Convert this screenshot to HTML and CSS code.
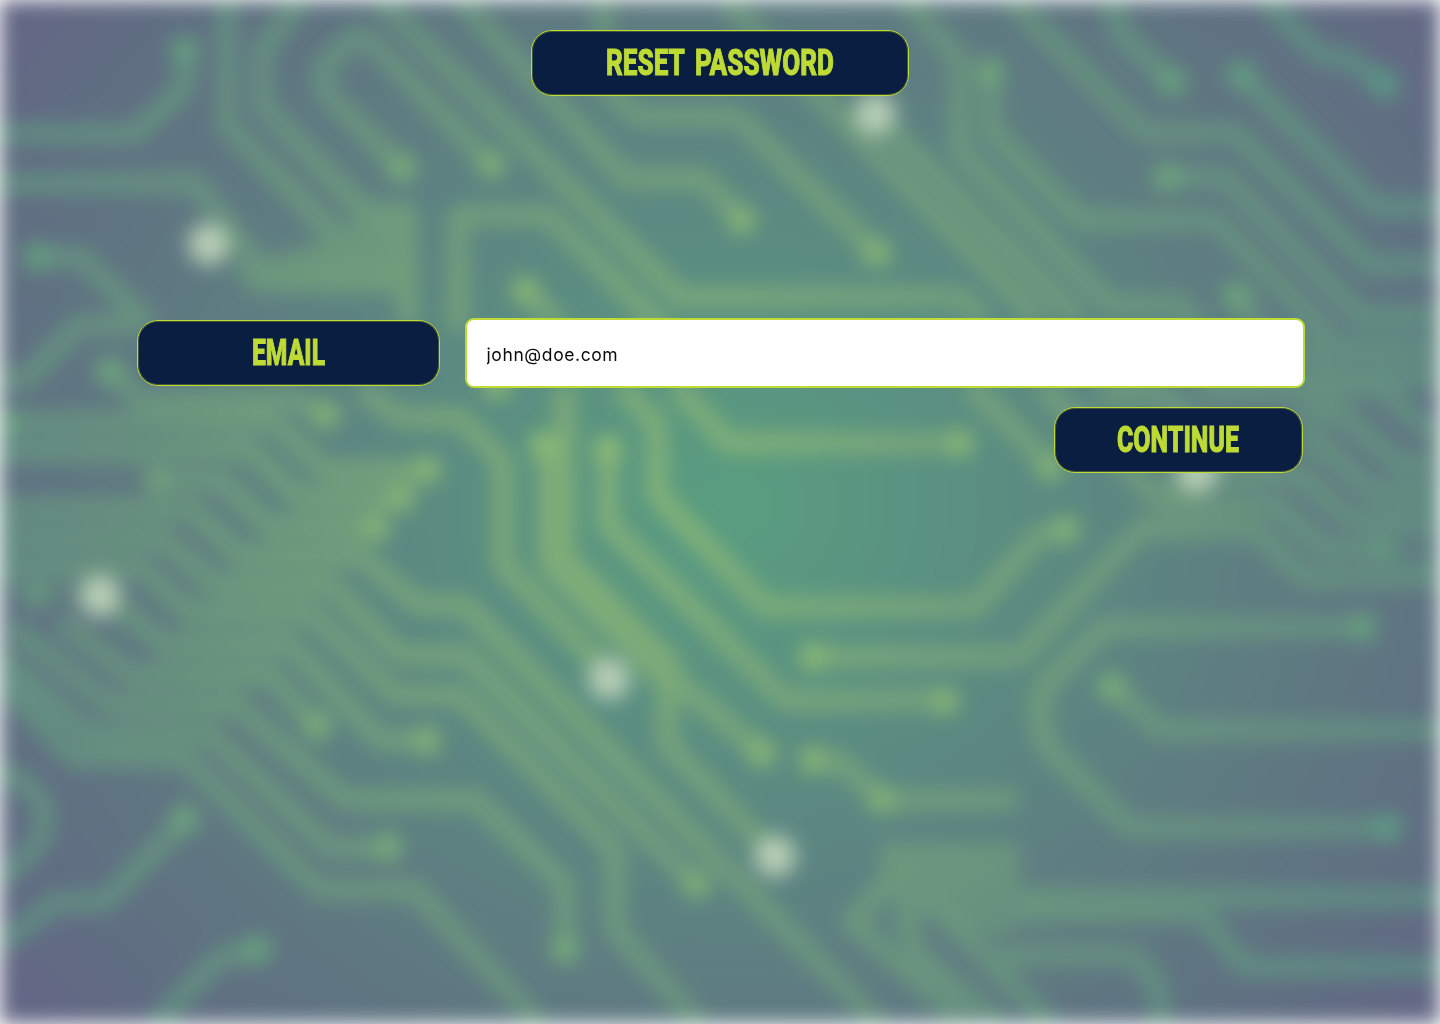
FILE: index.html
```html
<!DOCTYPE html>
<html lang="en">
<head>
<meta charset="utf-8">
<title>Reset password</title>
<link rel="stylesheet" href="styles.css">
</head>
<body>
<svg class="circuit" viewBox="0 0 1440 1024" aria-hidden="true">
  <defs>
    <radialGradient id="board" gradientUnits="userSpaceOnUse" cx="0" cy="0" r="1" gradientTransform="translate(735 505) scale(900 800)">
      <stop offset="0" stop-color="#599e80"/>
      <stop offset=".35" stop-color="#5b8a81"/>
      <stop offset=".65" stop-color="#5e7a81"/>
      <stop offset=".88" stop-color="#606e82"/>
      <stop offset="1" stop-color="#646785"/>
    </radialGradient>
    <radialGradient id="copper" gradientUnits="userSpaceOnUse" cx="0" cy="0" r="1" gradientTransform="translate(690 505) scale(880 800)">
      <stop offset="0" stop-color="#86b577"/>
      <stop offset=".35" stop-color="#76a37b"/>
      <stop offset=".65" stop-color="#69947f"/>
      <stop offset="1" stop-color="#5c8b83"/>
    </radialGradient>
    <radialGradient id="pad" gradientUnits="userSpaceOnUse" cx="0" cy="0" r="1" gradientTransform="translate(690 505) scale(880 800)">
      <stop offset="0" stop-color="#96c272"/>
      <stop offset=".4" stop-color="#84b476"/>
      <stop offset=".7" stop-color="#6ca57d"/>
      <stop offset="1" stop-color="#579786"/>
    </radialGradient>
  </defs>
  <rect width="1440" height="1024" fill="url(#board)"/>
  <g class="traces">
    <path d="M0 134H135L185 88V50M0 183H195L265 275H405M227 0V125L335 235M300 0L262 50V105L365 212H415M402 168L328 95Q318 78 328 62L352 40Q362 32 374 45L492 165M408 210V325M458 330V215H548L670 335M380 0L680 297H960L985 320"/>
    <path d="M460 0L625 178H702L742 220M603 0V85L638 117H737L877 253M725 0L1040 320M875 115L1080 320M905 0L960 60V150L1110 305H1180L1200 325M990 72V130L1080 220H1215L1330 335"/>
    <path d="M1010 0L1145 133H1235L1370 265H1440M1110 0L1122 35L1172 82M1265 0L1320 55L1350 60L1385 85M1241 75L1375 207H1440M1167 177H1225L1360 315H1440M1237 296L1260 325"/>
    <path d="M37 257H80L150 325M0 380H25L80 325H140M525 290L560 325M110 371L140 400H295L325 415"/>
    <path d="M0 421H272L325 470H425M0 451H250L300 498H401M157 480H220L270 527H376M0 508H190L240 556H360L418 605H465L880 1024M0 538H162L215 585H330L400 655H465L697 885M0 567H140L190 613H310L395 695H460L615 850V930L700 1024"/>
    <path d="M115 605L165 645H290L380 740H427M60 620L130 675H270L317 727M10 625L110 705H235L345 800H475L565 885V950M0 655L90 735H210L330 848H388M0 680L75 758H185L320 890H415L540 1024"/>
    <path d="M0 770Q45 790 45 820Q45 845 0 880M0 945L55 902H105L185 820M155 1024L220 958L255 950M360 390L400 418H460L503 462V565L605 670M565 385V455"/>
    <path d="M608 450V525L785 700H945M620 385L657 425V495L765 607H975L1040 535L1066 530M675 385L728 443H960M970 385L1055 470M1040 385L1150 490H1190M1100 393H1160L1200 430M667 665V745L775 856M650 660L762 752"/>
    <path d="M812 657H1020L1140 530H1255L1305 578H1440M1363 627H1105L1050 680Q1040 690 1040 710Q1040 740 1055 755L1130 828H1388M1112 687L1160 730H1440M812 760L842 763L882 800H1018"/>
    <path d="M1020 898H1440M1020 913H1200L1245 967H1440M1000 955H1130Q1162 975 1162 1024M890 880L852 922L965 1024M908 900Q900 945 935 970L1000 1024M930 900L1050 1024"/>
    <path d="M1305 350H1440M1305 378H1440M1200 388H1380L1440 440M1305 412H1340L1398 463H1440M1305 445H1320L1375 493H1440M1200 475H1300L1352 521H1440M1160 505H1275L1325 549H1383"/>
    <path class="bus" d="M556 450V560L672 677"/>
  </g>
  <g class="planes">
    <path d="M325 240L365 212H416V294H250L232 265L265 258Z"/>
    <path d="M880 843H1020V925L1000 940L920 915L880 890Z"/>
    <path class="weave" d="M130 400H272V425L250 451H160V466H0V421H130ZM0 500H190L140 570L100 600H0ZM325 470H425L376 528L360 556L330 585L310 613L290 645L270 675L235 705L210 735L185 758H80L110 705L130 675L165 645L190 613L215 585L240 556L270 527L300 498Z"/>
    <path class="weave" d="M1290 325H1440V385H1360L1340 412L1320 445H1290ZM1398 463H1440V580H1383L1375 530L1352 521ZM1140 500H1275L1255 535H1140Z"/>
  </g>
  <g class="pads">
    <circle cx="185" cy="50" r="14"/><circle cx="402" cy="168" r="14"/><circle cx="492" cy="165" r="14"/><circle cx="742" cy="220" r="14"/>
    <circle cx="877" cy="253" r="14"/><circle cx="990" cy="72" r="14"/><circle cx="1172" cy="82" r="14"/><circle cx="1385" cy="85" r="14"/>
    <circle cx="1241" cy="75" r="14"/><circle cx="1167" cy="177" r="14"/><circle cx="1237" cy="296" r="14"/><circle cx="37" cy="257" r="14"/>
    <circle cx="525" cy="290" r="14"/><circle cx="110" cy="371" r="14"/><circle cx="326" cy="415" r="14"/><circle cx="10" cy="423" r="12"/>
    <circle cx="427" cy="470" r="14"/><circle cx="401" cy="498" r="14"/><circle cx="376" cy="528" r="14"/><circle cx="157" cy="480" r="12"/>
    <circle cx="37" cy="596" r="11"/><circle cx="427" cy="741" r="14"/><circle cx="318" cy="726" r="14"/><circle cx="565" cy="950" r="14"/>
    <circle cx="388" cy="847" r="14"/><circle cx="185" cy="819" r="14"/><circle cx="257" cy="950" r="14"/><circle cx="697" cy="885" r="14"/>
    <circle cx="543" cy="445" r="14"/><circle cx="608" cy="449" r="14"/><circle cx="762" cy="753" r="14"/><circle cx="945" cy="701" r="14"/>
    <circle cx="1066" cy="530" r="14"/><circle cx="960" cy="443" r="14"/><circle cx="1050" cy="467" r="14"/><circle cx="497" cy="385" r="14"/>
    <circle cx="813" cy="657" r="14"/><circle cx="1363" cy="627" r="14"/><circle cx="1388" cy="828" r="14"/><circle cx="1112" cy="687" r="14"/>
    <circle cx="813" cy="760" r="14"/><circle cx="882" cy="800" r="14"/><circle cx="1383" cy="549" r="11"/>
  </g>
  <g class="lights">
    <circle cx="209" cy="244" r="21"/><circle cx="875" cy="114" r="21"/><circle cx="100" cy="596" r="21"/>
    <circle cx="609" cy="679" r="21"/><circle cx="775" cy="856" r="21"/><circle cx="1197" cy="472" r="21"/>
  </g>
</svg>
<main class="page">
  <h1 class="plate plate-title"><svg class="caption" width="230" height="36"><text class="spaced" x="1" y="30" textLength="228" lengthAdjust="spacingAndGlyphs">RESET PASSWORD</text></svg></h1>
  <form class="form">
    <div class="row">
      <label class="plate plate-label" for="email"><svg class="caption" width="74" height="36"><text x="1" y="30" textLength="73" lengthAdjust="spacingAndGlyphs">EMAIL</text></svg></label>
      <input class="field" id="email" type="text" value="john@doe.com">
    </div>
    <button class="plate plate-button" type="button"><svg class="caption" width="123" height="36"><text x="0" y="30" textLength="122" lengthAdjust="spacingAndGlyphs">CONTINUE</text></svg></button>
  </form>
</main>
</body>
</html>
```
FILE: styles.css
```css
* { box-sizing: border-box; }

body {
  margin: 0;
  height: 1024px;
  overflow: hidden;
  background: #fff;
  font-family: Inter, "Liberation Sans", sans-serif;
}

.circuit {
  position: absolute;
  inset: 0;
  z-index: -1;
  width: 1440px;
  height: 1024px;
  overflow: hidden;
  filter: blur(10px);
}

.traces {
  fill: none;
  stroke: url(#copper);
  stroke-width: 20;
  stroke-linejoin: round;
}

.traces .bus { stroke-width: 38; }
.planes { fill: url(#copper); opacity: .85; }
.planes .weave { opacity: .5; }
.pads { fill: url(#pad); }
.lights { fill: #b6cdb4; }

.page {
  display: flex;
  flex-direction: column;
  align-items: center;
  padding-top: 30px;
}

.plate {
  display: flex;
  align-items: center;
  justify-content: center;
  height: 66px;
  margin: 0;
  padding: 0;
  border: 1px solid #bedb35;
  border-radius: 21px;
  background: #0a1e41;
  box-shadow: inset 0 0 0 1px rgba(190, 219, 53, .3);
}

.plate-title { width: 378px; }
.plate-label { width: 303px; }

.plate-button {
  align-self: flex-end;
  width: 249px;
  margin: 19px 2px 0 0;
}

.caption {
  display: block;
  overflow: visible;
  fill: #bedb35;
  stroke: #bedb35;
  stroke-width: 1;
  font-family: Roboto, "Liberation Sans", sans-serif;
  font-size: 36px;
  font-weight: 800;
}

.caption .spaced { word-spacing: 6px; }

.form {
  display: flex;
  flex-direction: column;
  width: 1168px;
  margin: 222px 0 0 1px;
}

.row {
  display: flex;
  align-items: center;
  justify-content: space-between;
}

.field {
  width: 840px;
  height: 70px;
  padding: 2px 20px 0;
  border: 2px solid #bedb35;
  border-radius: 9px;
  background: #fff;
  color: #0b0b0b;
  font-family: Inter, "Liberation Sans", sans-serif;
  font-size: 17.5px;
  letter-spacing: .6px;
  outline: none;
}
```
